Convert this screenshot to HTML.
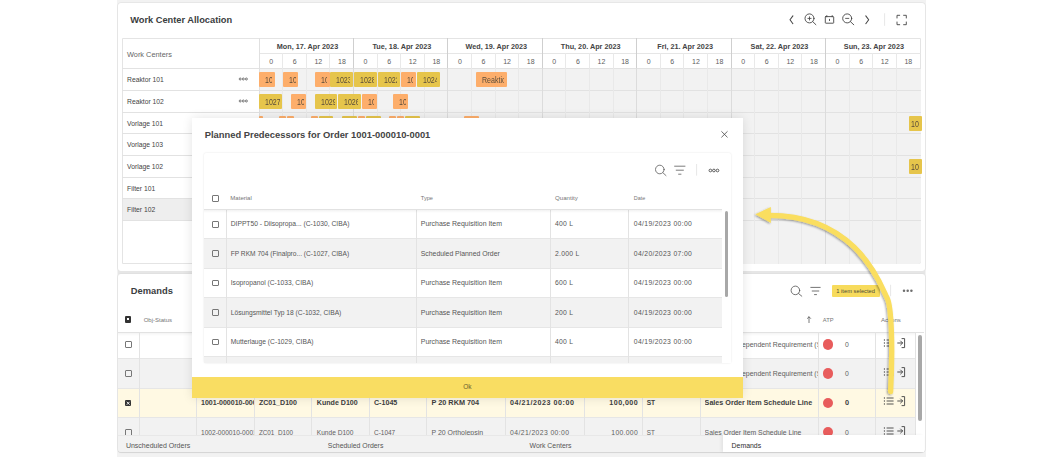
<!DOCTYPE html>
<html><head><meta charset="utf-8"><style>
html,body{margin:0;padding:0;}
body{width:1042px;height:457px;position:relative;overflow:hidden;background:#fff;font-family:"Liberation Sans",sans-serif;}
</style></head><body>
<div style="position:absolute;left:117.00px;top:0.00px;width:809.00px;height:457.00px;background:#F2F2F2;"></div>
<div style="position:absolute;left:117.60px;top:2.60px;width:807.00px;height:268.40px;background:#fff;border-radius:3px;box-shadow:0 0 0 0.6px #E2E2E2, 0 0 1.5px rgba(0,0,0,0.12);"></div>
<div style="position:absolute;left:130.20px;top:10.00px;line-height:20px;font-size:9.27px;font-weight:bold;color:#3A3D40;white-space:nowrap;">Work Center Allocation</div>
<svg style="position:absolute;left:0;top:0" width="1042" height="457">
<g fill="none" stroke="#444" stroke-width="0.9" stroke-linecap="round" stroke-linejoin="round">
<path d="M792.9 15.9 L790 19.8 L792.9 23.7" stroke-width="1.05"/>
<circle cx="809.5" cy="18.4" r="4.5"/><path d="M812.7 21.6 L815.9 24.7"/><path d="M809.5 16.8 V20 M807.9 18.4 H811.1" stroke-width="0.85"/>
<rect x="825.3" y="16.6" width="8.4" height="6.6" rx="0.5"/><path d="M826.8 15.6 V16.8 M832.2 15.6 V16.8 M829.5 19.3 V20.6"/>
<circle cx="847.2" cy="18.4" r="4.5"/><path d="M850.4 21.6 L853.8 24.8"/><path d="M845.6 18.4 H848.8" stroke-width="0.85"/>
<path d="M865.8 15.9 L868.7 19.8 L865.8 23.7" stroke-width="1.05"/>
<path d="M897 18 V15.3 H899.7 M903.6 15.3 H906.3 V18 M906.3 22 V24.7 H903.6 M899.7 24.7 H897 V22"/>
</g>
<path d="M884.6 13.3 V25.8" stroke="#E0E0E0" stroke-width="0.8"/>
</svg>
<div style="position:absolute;left:122.00px;top:38.00px;width:799.00px;height:226.00px;border:1px solid #E4E4E4;box-sizing:border-box;background:#fff;border-radius:0 0 2px 0;"></div>
<div style="position:absolute;left:259.00px;top:68.00px;width:662.00px;height:196.00px;background:#F2F2F2;border-radius:0 0 3px 0;"></div>
<div style="position:absolute;left:123.00px;top:199.00px;width:136.00px;height:21.00px;background:#EEEEEE;"></div>
<div style="position:absolute;left:122.00px;top:68.00px;width:799.00px;height:1.00px;background:#E2E2E2;"></div>
<div style="position:absolute;left:259.00px;top:53.00px;width:662.00px;height:1.00px;background:#E6E6E6;"></div>
<div style="position:absolute;left:122.00px;top:90.00px;width:799.00px;height:1.00px;background:#E2E2E2;"></div>
<div style="position:absolute;left:122.00px;top:112.00px;width:799.00px;height:1.00px;background:#E2E2E2;"></div>
<div style="position:absolute;left:122.00px;top:133.00px;width:799.00px;height:1.00px;background:#E2E2E2;"></div>
<div style="position:absolute;left:122.00px;top:155.00px;width:799.00px;height:1.00px;background:#E2E2E2;"></div>
<div style="position:absolute;left:122.00px;top:177.00px;width:799.00px;height:1.00px;background:#E2E2E2;"></div>
<div style="position:absolute;left:122.00px;top:198.00px;width:799.00px;height:1.00px;background:#E2E2E2;"></div>
<div style="position:absolute;left:122.00px;top:220.00px;width:799.00px;height:1.00px;background:#E2E2E2;"></div>
<div style="position:absolute;left:259.00px;top:38.00px;width:1.00px;height:226.00px;background:#E0E0E0;"></div>
<div style="position:absolute;left:282.00px;top:53.00px;width:1.00px;height:211.00px;background:#E9E9E9;"></div>
<div style="position:absolute;left:306.00px;top:53.00px;width:1.00px;height:211.00px;background:#E9E9E9;"></div>
<div style="position:absolute;left:329.00px;top:53.00px;width:1.00px;height:211.00px;background:#E9E9E9;"></div>
<div style="position:absolute;left:353.00px;top:38.00px;width:1.00px;height:30.00px;background:#CFCFCF;"></div>
<div style="position:absolute;left:353.00px;top:68.00px;width:1.00px;height:196.00px;background:#DCDCDC;"></div>
<div style="position:absolute;left:377.00px;top:53.00px;width:1.00px;height:211.00px;background:#E9E9E9;"></div>
<div style="position:absolute;left:400.00px;top:53.00px;width:1.00px;height:211.00px;background:#E9E9E9;"></div>
<div style="position:absolute;left:424.00px;top:53.00px;width:1.00px;height:211.00px;background:#E9E9E9;"></div>
<div style="position:absolute;left:447.00px;top:38.00px;width:1.00px;height:30.00px;background:#CFCFCF;"></div>
<div style="position:absolute;left:447.00px;top:68.00px;width:1.00px;height:196.00px;background:#DCDCDC;"></div>
<div style="position:absolute;left:471.00px;top:53.00px;width:1.00px;height:211.00px;background:#E9E9E9;"></div>
<div style="position:absolute;left:495.00px;top:53.00px;width:1.00px;height:211.00px;background:#E9E9E9;"></div>
<div style="position:absolute;left:518.00px;top:53.00px;width:1.00px;height:211.00px;background:#E9E9E9;"></div>
<div style="position:absolute;left:542.00px;top:38.00px;width:1.00px;height:30.00px;background:#CFCFCF;"></div>
<div style="position:absolute;left:542.00px;top:68.00px;width:1.00px;height:196.00px;background:#DCDCDC;"></div>
<div style="position:absolute;left:565.00px;top:53.00px;width:1.00px;height:211.00px;background:#E9E9E9;"></div>
<div style="position:absolute;left:589.00px;top:53.00px;width:1.00px;height:211.00px;background:#E9E9E9;"></div>
<div style="position:absolute;left:613.00px;top:53.00px;width:1.00px;height:211.00px;background:#E9E9E9;"></div>
<div style="position:absolute;left:636.00px;top:38.00px;width:1.00px;height:30.00px;background:#CFCFCF;"></div>
<div style="position:absolute;left:636.00px;top:68.00px;width:1.00px;height:196.00px;background:#DCDCDC;"></div>
<div style="position:absolute;left:660.00px;top:53.00px;width:1.00px;height:211.00px;background:#E9E9E9;"></div>
<div style="position:absolute;left:683.00px;top:53.00px;width:1.00px;height:211.00px;background:#E9E9E9;"></div>
<div style="position:absolute;left:707.00px;top:53.00px;width:1.00px;height:211.00px;background:#E9E9E9;"></div>
<div style="position:absolute;left:731.00px;top:38.00px;width:1.00px;height:30.00px;background:#CFCFCF;"></div>
<div style="position:absolute;left:731.00px;top:68.00px;width:1.00px;height:196.00px;background:#DCDCDC;"></div>
<div style="position:absolute;left:754.00px;top:53.00px;width:1.00px;height:211.00px;background:#E9E9E9;"></div>
<div style="position:absolute;left:778.00px;top:53.00px;width:1.00px;height:211.00px;background:#E9E9E9;"></div>
<div style="position:absolute;left:801.00px;top:53.00px;width:1.00px;height:211.00px;background:#E9E9E9;"></div>
<div style="position:absolute;left:825.00px;top:38.00px;width:1.00px;height:30.00px;background:#CFCFCF;"></div>
<div style="position:absolute;left:825.00px;top:68.00px;width:1.00px;height:196.00px;background:#DCDCDC;"></div>
<div style="position:absolute;left:849.00px;top:53.00px;width:1.00px;height:211.00px;background:#E9E9E9;"></div>
<div style="position:absolute;left:872.00px;top:53.00px;width:1.00px;height:211.00px;background:#E9E9E9;"></div>
<div style="position:absolute;left:896.00px;top:53.00px;width:1.00px;height:211.00px;background:#E9E9E9;"></div>
<div style="position:absolute;left:207.50px;width:200px;text-align:center;top:36.70px;line-height:20px;font-size:7.26px;font-weight:bold;color:#444;white-space:nowrap;">Mon, 17. Apr 2023</div>
<div style="position:absolute;left:171.10px;width:200px;text-align:center;top:51.70px;line-height:20px;font-size:7.00px;font-weight:normal;color:#606060;white-space:nowrap;">0</div>
<div style="position:absolute;left:194.70px;width:200px;text-align:center;top:51.70px;line-height:20px;font-size:7.00px;font-weight:normal;color:#606060;white-space:nowrap;">6</div>
<div style="position:absolute;left:218.30px;width:200px;text-align:center;top:51.70px;line-height:20px;font-size:7.00px;font-weight:normal;color:#606060;white-space:nowrap;">12</div>
<div style="position:absolute;left:241.90px;width:200px;text-align:center;top:51.70px;line-height:20px;font-size:7.00px;font-weight:normal;color:#606060;white-space:nowrap;">18</div>
<div style="position:absolute;left:301.90px;width:200px;text-align:center;top:36.70px;line-height:20px;font-size:7.26px;font-weight:bold;color:#444;white-space:nowrap;">Tue, 18. Apr 2023</div>
<div style="position:absolute;left:265.50px;width:200px;text-align:center;top:51.70px;line-height:20px;font-size:7.00px;font-weight:normal;color:#606060;white-space:nowrap;">0</div>
<div style="position:absolute;left:289.10px;width:200px;text-align:center;top:51.70px;line-height:20px;font-size:7.00px;font-weight:normal;color:#606060;white-space:nowrap;">6</div>
<div style="position:absolute;left:312.70px;width:200px;text-align:center;top:51.70px;line-height:20px;font-size:7.00px;font-weight:normal;color:#606060;white-space:nowrap;">12</div>
<div style="position:absolute;left:336.30px;width:200px;text-align:center;top:51.70px;line-height:20px;font-size:7.00px;font-weight:normal;color:#606060;white-space:nowrap;">18</div>
<div style="position:absolute;left:396.30px;width:200px;text-align:center;top:36.70px;line-height:20px;font-size:7.26px;font-weight:bold;color:#444;white-space:nowrap;">Wed, 19. Apr 2023</div>
<div style="position:absolute;left:359.90px;width:200px;text-align:center;top:51.70px;line-height:20px;font-size:7.00px;font-weight:normal;color:#606060;white-space:nowrap;">0</div>
<div style="position:absolute;left:383.50px;width:200px;text-align:center;top:51.70px;line-height:20px;font-size:7.00px;font-weight:normal;color:#606060;white-space:nowrap;">6</div>
<div style="position:absolute;left:407.10px;width:200px;text-align:center;top:51.70px;line-height:20px;font-size:7.00px;font-weight:normal;color:#606060;white-space:nowrap;">12</div>
<div style="position:absolute;left:430.70px;width:200px;text-align:center;top:51.70px;line-height:20px;font-size:7.00px;font-weight:normal;color:#606060;white-space:nowrap;">18</div>
<div style="position:absolute;left:490.70px;width:200px;text-align:center;top:36.70px;line-height:20px;font-size:7.26px;font-weight:bold;color:#444;white-space:nowrap;">Thu, 20. Apr 2023</div>
<div style="position:absolute;left:454.30px;width:200px;text-align:center;top:51.70px;line-height:20px;font-size:7.00px;font-weight:normal;color:#606060;white-space:nowrap;">0</div>
<div style="position:absolute;left:477.90px;width:200px;text-align:center;top:51.70px;line-height:20px;font-size:7.00px;font-weight:normal;color:#606060;white-space:nowrap;">6</div>
<div style="position:absolute;left:501.50px;width:200px;text-align:center;top:51.70px;line-height:20px;font-size:7.00px;font-weight:normal;color:#606060;white-space:nowrap;">12</div>
<div style="position:absolute;left:525.10px;width:200px;text-align:center;top:51.70px;line-height:20px;font-size:7.00px;font-weight:normal;color:#606060;white-space:nowrap;">18</div>
<div style="position:absolute;left:585.10px;width:200px;text-align:center;top:36.70px;line-height:20px;font-size:7.26px;font-weight:bold;color:#444;white-space:nowrap;">Fri, 21. Apr 2023</div>
<div style="position:absolute;left:548.70px;width:200px;text-align:center;top:51.70px;line-height:20px;font-size:7.00px;font-weight:normal;color:#606060;white-space:nowrap;">0</div>
<div style="position:absolute;left:572.30px;width:200px;text-align:center;top:51.70px;line-height:20px;font-size:7.00px;font-weight:normal;color:#606060;white-space:nowrap;">6</div>
<div style="position:absolute;left:595.90px;width:200px;text-align:center;top:51.70px;line-height:20px;font-size:7.00px;font-weight:normal;color:#606060;white-space:nowrap;">12</div>
<div style="position:absolute;left:619.50px;width:200px;text-align:center;top:51.70px;line-height:20px;font-size:7.00px;font-weight:normal;color:#606060;white-space:nowrap;">18</div>
<div style="position:absolute;left:679.50px;width:200px;text-align:center;top:36.70px;line-height:20px;font-size:7.26px;font-weight:bold;color:#444;white-space:nowrap;">Sat, 22. Apr 2023</div>
<div style="position:absolute;left:643.10px;width:200px;text-align:center;top:51.70px;line-height:20px;font-size:7.00px;font-weight:normal;color:#606060;white-space:nowrap;">0</div>
<div style="position:absolute;left:666.70px;width:200px;text-align:center;top:51.70px;line-height:20px;font-size:7.00px;font-weight:normal;color:#606060;white-space:nowrap;">6</div>
<div style="position:absolute;left:690.30px;width:200px;text-align:center;top:51.70px;line-height:20px;font-size:7.00px;font-weight:normal;color:#606060;white-space:nowrap;">12</div>
<div style="position:absolute;left:713.90px;width:200px;text-align:center;top:51.70px;line-height:20px;font-size:7.00px;font-weight:normal;color:#606060;white-space:nowrap;">18</div>
<div style="position:absolute;left:773.90px;width:200px;text-align:center;top:36.70px;line-height:20px;font-size:7.26px;font-weight:bold;color:#444;white-space:nowrap;">Sun, 23. Apr 2023</div>
<div style="position:absolute;left:737.50px;width:200px;text-align:center;top:51.70px;line-height:20px;font-size:7.00px;font-weight:normal;color:#606060;white-space:nowrap;">0</div>
<div style="position:absolute;left:761.10px;width:200px;text-align:center;top:51.70px;line-height:20px;font-size:7.00px;font-weight:normal;color:#606060;white-space:nowrap;">6</div>
<div style="position:absolute;left:784.70px;width:200px;text-align:center;top:51.70px;line-height:20px;font-size:7.00px;font-weight:normal;color:#606060;white-space:nowrap;">12</div>
<div style="position:absolute;left:808.30px;width:200px;text-align:center;top:51.70px;line-height:20px;font-size:7.00px;font-weight:normal;color:#606060;white-space:nowrap;">18</div>
<div style="position:absolute;left:127.00px;top:45.20px;line-height:20px;font-size:7.37px;font-weight:normal;color:#666;white-space:nowrap;">Work Centers</div>
<div style="position:absolute;left:127.00px;top:69.65px;line-height:20px;font-size:6.77px;font-weight:normal;color:#444;white-space:nowrap;">Reaktor 101</div>
<div style="position:absolute;left:127.00px;top:91.65px;line-height:20px;font-size:6.77px;font-weight:normal;color:#444;white-space:nowrap;">Reaktor 102</div>
<div style="position:absolute;left:127.00px;top:113.65px;line-height:20px;font-size:6.77px;font-weight:normal;color:#444;white-space:nowrap;">Vorlage 101</div>
<div style="position:absolute;left:127.00px;top:134.65px;line-height:20px;font-size:6.77px;font-weight:normal;color:#444;white-space:nowrap;">Vorlage 103</div>
<div style="position:absolute;left:127.00px;top:156.65px;line-height:20px;font-size:6.77px;font-weight:normal;color:#444;white-space:nowrap;">Vorlage 102</div>
<div style="position:absolute;left:127.00px;top:178.65px;line-height:20px;font-size:6.77px;font-weight:normal;color:#444;white-space:nowrap;">Filter 101</div>
<div style="position:absolute;left:127.00px;top:199.65px;line-height:20px;font-size:6.77px;font-weight:normal;color:#444;white-space:nowrap;">Filter 102</div>
<svg style="position:absolute;left:238px;top:76.25px" width="12" height="6"><g fill="none" stroke="#666" stroke-width="0.9"><circle cx="2.2" cy="3" r="1.0"/><circle cx="5.3" cy="3" r="1.0"/><circle cx="8.4" cy="3" r="1.0"/></g></svg>
<svg style="position:absolute;left:238px;top:98.25px" width="12" height="6"><g fill="none" stroke="#666" stroke-width="0.9"><circle cx="2.2" cy="3" r="1.0"/><circle cx="5.3" cy="3" r="1.0"/><circle cx="8.4" cy="3" r="1.0"/></g></svg>
<div style="position:absolute;left:909.00px;top:115.80px;width:13.00px;height:15.1px;background:#E6C54B;border-radius:1px;overflow:hidden;"><div style="position:absolute;left:1.8px;width:8.60px;top:0;height:15.1px;overflow:hidden;"><div style="position:absolute;left:0;top:1.3px;line-height:15.1px;font-size:8.4px;color:#5A4C3A;white-space:nowrap;transform:scaleX(0.84);transform-origin:0 0;">1030</div></div></div>
<div style="position:absolute;left:909.00px;top:158.80px;width:13.00px;height:15.1px;background:#E6C54B;border-radius:1px;overflow:hidden;"><div style="position:absolute;left:1.8px;width:8.60px;top:0;height:15.1px;overflow:hidden;"><div style="position:absolute;left:0;top:1.3px;line-height:15.1px;font-size:8.4px;color:#5A4C3A;white-space:nowrap;transform:scaleX(0.84);transform-origin:0 0;">1031</div></div></div>
<div style="position:absolute;left:259.40px;top:71.80px;width:15.40px;height:15.1px;background:#FDAE6B;border-radius:1px;overflow:hidden;"><div style="position:absolute;left:6.0px;width:6.80px;top:0;height:15.1px;overflow:hidden;"><div style="position:absolute;left:0;top:1.3px;line-height:15.1px;font-size:8.4px;color:#5A4C3A;white-space:nowrap;transform:scaleX(0.84);transform-origin:0 0;">10</div></div></div>
<div style="position:absolute;left:283.20px;top:71.80px;width:15.00px;height:15.1px;background:#FDAE6B;border-radius:1px;overflow:hidden;"><div style="position:absolute;left:6.0px;width:6.40px;top:0;height:15.1px;overflow:hidden;"><div style="position:absolute;left:0;top:1.3px;line-height:15.1px;font-size:8.4px;color:#5A4C3A;white-space:nowrap;transform:scaleX(0.84);transform-origin:0 0;">10</div></div></div>
<div style="position:absolute;left:315.10px;top:71.80px;width:14.80px;height:15.1px;background:#FDAE6B;border-radius:1px;overflow:hidden;"><div style="position:absolute;left:6.0px;width:6.20px;top:0;height:15.1px;overflow:hidden;"><div style="position:absolute;left:0;top:1.3px;line-height:15.1px;font-size:8.4px;color:#5A4C3A;white-space:nowrap;transform:scaleX(0.84);transform-origin:0 0;">10</div></div></div>
<div style="position:absolute;left:330.20px;top:71.80px;width:22.50px;height:15.1px;background:#E6C54B;border-radius:1px;overflow:hidden;"><div style="position:absolute;left:6.0px;width:13.90px;top:0;height:15.1px;overflow:hidden;"><div style="position:absolute;left:0;top:1.3px;line-height:15.1px;font-size:8.4px;color:#5A4C3A;white-space:nowrap;transform:scaleX(0.84);transform-origin:0 0;">1023</div></div></div>
<div style="position:absolute;left:354.30px;top:71.80px;width:22.60px;height:15.1px;background:#E6C54B;border-radius:1px;overflow:hidden;"><div style="position:absolute;left:6.0px;width:14.00px;top:0;height:15.1px;overflow:hidden;"><div style="position:absolute;left:0;top:1.3px;line-height:15.1px;font-size:8.4px;color:#5A4C3A;white-space:nowrap;transform:scaleX(0.84);transform-origin:0 0;">1028</div></div></div>
<div style="position:absolute;left:377.80px;top:71.80px;width:22.20px;height:15.1px;background:#E6C54B;border-radius:1px;overflow:hidden;"><div style="position:absolute;left:6.0px;width:13.60px;top:0;height:15.1px;overflow:hidden;"><div style="position:absolute;left:0;top:1.3px;line-height:15.1px;font-size:8.4px;color:#5A4C3A;white-space:nowrap;transform:scaleX(0.84);transform-origin:0 0;">1022</div></div></div>
<div style="position:absolute;left:401.10px;top:71.80px;width:14.80px;height:15.1px;background:#FDAE6B;border-radius:1px;overflow:hidden;"><div style="position:absolute;left:6.0px;width:6.20px;top:0;height:15.1px;overflow:hidden;"><div style="position:absolute;left:0;top:1.3px;line-height:15.1px;font-size:8.4px;color:#5A4C3A;white-space:nowrap;transform:scaleX(0.84);transform-origin:0 0;">10</div></div></div>
<div style="position:absolute;left:417.10px;top:71.80px;width:22.60px;height:15.1px;background:#E6C54B;border-radius:1px;overflow:hidden;"><div style="position:absolute;left:6.0px;width:14.00px;top:0;height:15.1px;overflow:hidden;"><div style="position:absolute;left:0;top:1.3px;line-height:15.1px;font-size:8.4px;color:#5A4C3A;white-space:nowrap;transform:scaleX(0.84);transform-origin:0 0;">1024</div></div></div>
<div style="position:absolute;left:476.30px;top:71.80px;width:30.60px;height:15.1px;background:#FDAE6B;border-radius:1px;overflow:hidden;"><div style="position:absolute;left:6.0px;width:22.00px;top:0;height:15.1px;overflow:hidden;"><div style="position:absolute;left:0;top:1.3px;line-height:15.1px;font-size:8.4px;color:#5A4C3A;white-space:nowrap;transform:scaleX(0.84);transform-origin:0 0;">Reaktion</div></div></div>
<div style="position:absolute;left:259.40px;top:93.80px;width:23.10px;height:15.1px;background:#E6C54B;border-radius:1px;overflow:hidden;"><div style="position:absolute;left:6.0px;width:14.50px;top:0;height:15.1px;overflow:hidden;"><div style="position:absolute;left:0;top:1.3px;line-height:15.1px;font-size:8.4px;color:#5A4C3A;white-space:nowrap;transform:scaleX(0.84);transform-origin:0 0;">1027</div></div></div>
<div style="position:absolute;left:291.00px;top:93.80px;width:15.10px;height:15.1px;background:#FDAE6B;border-radius:1px;overflow:hidden;"><div style="position:absolute;left:6.0px;width:6.50px;top:0;height:15.1px;overflow:hidden;"><div style="position:absolute;left:0;top:1.3px;line-height:15.1px;font-size:8.4px;color:#5A4C3A;white-space:nowrap;transform:scaleX(0.84);transform-origin:0 0;">10</div></div></div>
<div style="position:absolute;left:315.10px;top:93.80px;width:22.40px;height:15.1px;background:#E6C54B;border-radius:1px;overflow:hidden;"><div style="position:absolute;left:6.0px;width:13.80px;top:0;height:15.1px;overflow:hidden;"><div style="position:absolute;left:0;top:1.3px;line-height:15.1px;font-size:8.4px;color:#5A4C3A;white-space:nowrap;transform:scaleX(0.84);transform-origin:0 0;">1029</div></div></div>
<div style="position:absolute;left:338.20px;top:93.80px;width:22.60px;height:15.1px;background:#E6C54B;border-radius:1px;overflow:hidden;"><div style="position:absolute;left:6.0px;width:14.00px;top:0;height:15.1px;overflow:hidden;"><div style="position:absolute;left:0;top:1.3px;line-height:15.1px;font-size:8.4px;color:#5A4C3A;white-space:nowrap;transform:scaleX(0.84);transform-origin:0 0;">1026</div></div></div>
<div style="position:absolute;left:362.10px;top:93.80px;width:14.70px;height:15.1px;background:#FDAE6B;border-radius:1px;overflow:hidden;"><div style="position:absolute;left:6.0px;width:6.10px;top:0;height:15.1px;overflow:hidden;"><div style="position:absolute;left:0;top:1.3px;line-height:15.1px;font-size:8.4px;color:#5A4C3A;white-space:nowrap;transform:scaleX(0.84);transform-origin:0 0;">10</div></div></div>
<div style="position:absolute;left:393.00px;top:93.80px;width:15.30px;height:15.1px;background:#FDAE6B;border-radius:1px;overflow:hidden;"><div style="position:absolute;left:6.0px;width:6.70px;top:0;height:15.1px;overflow:hidden;"><div style="position:absolute;left:0;top:1.3px;line-height:15.1px;font-size:8.4px;color:#5A4C3A;white-space:nowrap;transform:scaleX(0.84);transform-origin:0 0;">10</div></div></div>
<div style="position:absolute;left:259.40px;top:115.80px;width:3.50px;height:15.1px;background:#FDAE6B;border-radius:1px;overflow:hidden;"><div style="position:absolute;left:6.0px;width:-5.10px;top:0;height:15.1px;overflow:hidden;"><div style="position:absolute;left:0;top:1.3px;line-height:15.1px;font-size:8.4px;color:#5A4C3A;white-space:nowrap;transform:scaleX(0.84);transform-origin:0 0;"></div></div></div>
<div style="position:absolute;left:279.00px;top:115.80px;width:6.70px;height:15.1px;background:#FDAE6B;border-radius:1px;overflow:hidden;"><div style="position:absolute;left:6.0px;width:-1.90px;top:0;height:15.1px;overflow:hidden;"><div style="position:absolute;left:0;top:1.3px;line-height:15.1px;font-size:8.4px;color:#5A4C3A;white-space:nowrap;transform:scaleX(0.84);transform-origin:0 0;"></div></div></div>
<div style="position:absolute;left:286.90px;top:115.80px;width:7.00px;height:15.1px;background:#FDAE6B;border-radius:1px;overflow:hidden;"><div style="position:absolute;left:6.0px;width:-1.60px;top:0;height:15.1px;overflow:hidden;"><div style="position:absolute;left:0;top:1.3px;line-height:15.1px;font-size:8.4px;color:#5A4C3A;white-space:nowrap;transform:scaleX(0.84);transform-origin:0 0;"></div></div></div>
<div style="position:absolute;left:310.70px;top:115.80px;width:7.20px;height:15.1px;background:#FDAE6B;border-radius:1px;overflow:hidden;"><div style="position:absolute;left:6.0px;width:-1.40px;top:0;height:15.1px;overflow:hidden;"><div style="position:absolute;left:0;top:1.3px;line-height:15.1px;font-size:8.4px;color:#5A4C3A;white-space:nowrap;transform:scaleX(0.84);transform-origin:0 0;"></div></div></div>
<div style="position:absolute;left:318.60px;top:115.80px;width:14.40px;height:15.1px;background:#E6C54B;border-radius:1px;overflow:hidden;"><div style="position:absolute;left:6.0px;width:5.80px;top:0;height:15.1px;overflow:hidden;"><div style="position:absolute;left:0;top:1.3px;line-height:15.1px;font-size:8.4px;color:#5A4C3A;white-space:nowrap;transform:scaleX(0.84);transform-origin:0 0;"></div></div></div>
<div style="position:absolute;left:341.90px;top:115.80px;width:15.10px;height:15.1px;background:#E6C54B;border-radius:1px;overflow:hidden;"><div style="position:absolute;left:6.0px;width:6.50px;top:0;height:15.1px;overflow:hidden;"><div style="position:absolute;left:0;top:1.3px;line-height:15.1px;font-size:8.4px;color:#5A4C3A;white-space:nowrap;transform:scaleX(0.84);transform-origin:0 0;"></div></div></div>
<div style="position:absolute;left:358.20px;top:115.80px;width:6.70px;height:15.1px;background:#FDAE6B;border-radius:1px;overflow:hidden;"><div style="position:absolute;left:6.0px;width:-1.90px;top:0;height:15.1px;overflow:hidden;"><div style="position:absolute;left:0;top:1.3px;line-height:15.1px;font-size:8.4px;color:#5A4C3A;white-space:nowrap;transform:scaleX(0.84);transform-origin:0 0;"></div></div></div>
<div style="position:absolute;left:365.80px;top:115.80px;width:15.20px;height:15.1px;background:#E6C54B;border-radius:1px;overflow:hidden;"><div style="position:absolute;left:6.0px;width:6.60px;top:0;height:15.1px;overflow:hidden;"><div style="position:absolute;left:0;top:1.3px;line-height:15.1px;font-size:8.4px;color:#5A4C3A;white-space:nowrap;transform:scaleX(0.84);transform-origin:0 0;"></div></div></div>
<div style="position:absolute;left:388.60px;top:115.80px;width:7.40px;height:15.1px;background:#FDAE6B;border-radius:1px;overflow:hidden;"><div style="position:absolute;left:6.0px;width:-1.20px;top:0;height:15.1px;overflow:hidden;"><div style="position:absolute;left:0;top:1.3px;line-height:15.1px;font-size:8.4px;color:#5A4C3A;white-space:nowrap;transform:scaleX(0.84);transform-origin:0 0;"></div></div></div>
<div style="position:absolute;left:397.00px;top:115.80px;width:6.80px;height:15.1px;background:#FDAE6B;border-radius:1px;overflow:hidden;"><div style="position:absolute;left:6.0px;width:-1.80px;top:0;height:15.1px;overflow:hidden;"><div style="position:absolute;left:0;top:1.3px;line-height:15.1px;font-size:8.4px;color:#5A4C3A;white-space:nowrap;transform:scaleX(0.84);transform-origin:0 0;"></div></div></div>
<div style="position:absolute;left:405.00px;top:115.80px;width:14.80px;height:15.1px;background:#E6C54B;border-radius:1px;overflow:hidden;"><div style="position:absolute;left:6.0px;width:6.20px;top:0;height:15.1px;overflow:hidden;"><div style="position:absolute;left:0;top:1.3px;line-height:15.1px;font-size:8.4px;color:#5A4C3A;white-space:nowrap;transform:scaleX(0.84);transform-origin:0 0;"></div></div></div>
<div style="position:absolute;left:463.70px;top:115.80px;width:14.90px;height:15.1px;background:#FDAE6B;border-radius:1px;overflow:hidden;"><div style="position:absolute;left:6.0px;width:6.30px;top:0;height:15.1px;overflow:hidden;"><div style="position:absolute;left:0;top:1.3px;line-height:15.1px;font-size:8.4px;color:#5A4C3A;white-space:nowrap;transform:scaleX(0.84);transform-origin:0 0;"></div></div></div>
<div style="position:absolute;left:117.60px;top:271.00px;width:807.00px;height:3.00px;background:#E6E6E6;"></div>
<div style="position:absolute;left:117.60px;top:274.00px;width:807.00px;height:178.00px;background:#fff;border-radius:3px;box-shadow:0 0 0 0.6px #E2E2E2, 0 0 1.5px rgba(0,0,0,0.12);"></div>
<div style="position:absolute;left:130.80px;top:281.00px;line-height:20px;font-size:9.35px;font-weight:bold;color:#3A3D40;white-space:nowrap;">Demands</div>
<svg style="position:absolute;left:0;top:0" width="1042" height="457">
<g fill="none" stroke="#505050" stroke-width="0.8" stroke-linecap="round">
<circle cx="795.4" cy="290.4" r="4.3"/><path d="M798.6 293.6 L801.8 296.2"/>
<path d="M810.8 287.4 H820.2 M812.2 291 H818.8 M814.5 294.6 H816.5"/>

</g>
<path d="M890.6 284.8 V296.2" stroke="#E0E0E0" stroke-width="0.8"/>
</svg>
<div style="position:absolute;left:831.80px;top:284.60px;width:48.00px;height:12.20px;background:#F7DB5C;border-radius:1px;"></div>
<svg style="position:absolute;left:900px;top:287px" width="16" height="8"><g fill="#6E6E6E"><circle cx="4" cy="3.85" r="1.25"/><circle cx="7.7" cy="3.85" r="1.25"/><circle cx="11.4" cy="3.85" r="1.25"/></g></svg>
<div style="position:absolute;left:836.30px;top:281.40px;line-height:20px;font-size:5.75px;font-weight:normal;color:#4A4A3A;white-space:nowrap;">1 item selected</div>
<div style="position:absolute;left:118.00px;top:332.00px;width:797.70px;height:26.00px;background:#FFFFFF;"></div>
<div style="position:absolute;left:118.00px;top:358.00px;width:797.70px;height:30.00px;background:#F2F2F2;"></div>
<div style="position:absolute;left:118.00px;top:358.00px;width:797.70px;height:1.00px;background:#E6E6E6;"></div>
<div style="position:absolute;left:118.00px;top:388.00px;width:797.70px;height:29.00px;background:#FFF9E3;"></div>
<div style="position:absolute;left:118.00px;top:388.00px;width:797.70px;height:1.00px;background:#E6E6E6;"></div>
<div style="position:absolute;left:118.00px;top:417.00px;width:797.70px;height:18.00px;background:#F2F2F2;"></div>
<div style="position:absolute;left:118.00px;top:417.00px;width:797.70px;height:1.00px;background:#E6E6E6;"></div>
<div style="position:absolute;left:118.00px;top:300.00px;width:806.00px;height:32.00px;background:#fff;"></div>
<div style="position:absolute;left:118.00px;top:332.00px;width:806.00px;height:1.00px;background:#E2E2E2;"></div>
<div style="position:absolute;left:118.00px;top:333.00px;width:797.70px;height:3.00px;background:linear-gradient(rgba(0,0,0,0.045),rgba(0,0,0,0));"></div>
<div style="position:absolute;left:139.00px;top:332.00px;width:1.00px;height:103.00px;background:#E3E3E3;"></div>
<div style="position:absolute;left:196.00px;top:332.00px;width:1.00px;height:103.00px;background:#E3E3E3;"></div>
<div style="position:absolute;left:254.00px;top:332.00px;width:1.00px;height:103.00px;background:#E3E3E3;"></div>
<div style="position:absolute;left:311.00px;top:332.00px;width:1.00px;height:103.00px;background:#E3E3E3;"></div>
<div style="position:absolute;left:369.00px;top:332.00px;width:1.00px;height:103.00px;background:#E3E3E3;"></div>
<div style="position:absolute;left:426.00px;top:332.00px;width:1.00px;height:103.00px;background:#E3E3E3;"></div>
<div style="position:absolute;left:505.00px;top:332.00px;width:1.00px;height:103.00px;background:#E3E3E3;"></div>
<div style="position:absolute;left:584.00px;top:332.00px;width:1.00px;height:103.00px;background:#E3E3E3;"></div>
<div style="position:absolute;left:642.00px;top:332.00px;width:1.00px;height:103.00px;background:#E3E3E3;"></div>
<div style="position:absolute;left:700.00px;top:332.00px;width:1.00px;height:103.00px;background:#E3E3E3;"></div>
<div style="position:absolute;left:818.00px;top:332.00px;width:1.00px;height:103.00px;background:#E3E3E3;"></div>
<div style="position:absolute;left:875.00px;top:332.00px;width:1.00px;height:103.00px;background:#E3E3E3;"></div>
<div style="position:absolute;left:915.00px;top:332.00px;width:1.00px;height:103.00px;background:#E3E3E3;"></div>
<div style="position:absolute;left:916.00px;top:333.00px;width:8.00px;height:102.00px;background:#fff;"></div>
<div style="position:absolute;left:918.10px;top:335.00px;width:3.70px;height:86.20px;background:#A8A8A8;border-radius:2px;"></div>
<div style="position:absolute;left:125.10px;top:316.10px;width:6.40px;height:6.50px;background:#333;border-radius:1px;"></div>
<div style="position:absolute;left:127.20px;top:318.20px;width:2.20px;height:2.20px;background:#fff;"></div>
<div style="position:absolute;left:143.70px;top:309.90px;line-height:20px;font-size:5.99px;font-weight:normal;color:#767676;white-space:nowrap;">Obj-Status</div>
<svg style="position:absolute;left:806px;top:315px" width="6" height="9"><path d="M3 1.8 V7.6 M1.4 3.4 L3 1.8 L4.6 3.4" fill="none" stroke="#555" stroke-width="0.8" stroke-linecap="round"/></svg>
<div style="position:absolute;left:822.80px;top:309.90px;line-height:20px;font-size:5.77px;font-weight:normal;color:#767676;white-space:nowrap;">ATP</div>
<div style="position:absolute;left:881.00px;top:309.90px;line-height:20px;font-size:6.04px;font-weight:normal;color:#767676;white-space:nowrap;">Actions</div>
<div style="position:absolute;left:125.10px;top:341.00px;width:6.80px;height:6.80px;border:1px solid #777;border-radius:1px;box-sizing:border-box;"></div>
<div style="position:absolute;left:822.70px;top:339.10px;width:10.6px;height:10.6px;border-radius:50%;background:#E85C5C;"></div>
<div style="position:absolute;left:845.00px;top:334.70px;line-height:20px;font-size:6.80px;font-weight:normal;color:#606060;white-space:nowrap;">0</div>
<svg style="position:absolute;left:880px;top:334.90px" width="30" height="16"><g fill="none" stroke="#4A4A4A" stroke-width="0.95" stroke-linecap="round" stroke-linejoin="round">
<path d="M7 5 H13.2 M7 8 H13.2 M7 11 H13.2"/>
<path d="M17.7 8 H22.6 M20.6 6 L22.6 8 L20.6 10 M22 3.6 H24.6 V12.6 H22"/>
</g><g fill="#4A4A4A"><circle cx="4.4" cy="5" r="0.65"/><circle cx="4.4" cy="8" r="0.65"/><circle cx="4.4" cy="11" r="0.65"/></g></svg>
<div style="position:absolute;left:125.10px;top:370.30px;width:6.80px;height:6.80px;border:1px solid #777;border-radius:1px;box-sizing:border-box;"></div>
<div style="position:absolute;left:822.70px;top:368.40px;width:10.6px;height:10.6px;border-radius:50%;background:#E85C5C;"></div>
<div style="position:absolute;left:845.00px;top:364.00px;line-height:20px;font-size:6.80px;font-weight:normal;color:#606060;white-space:nowrap;">0</div>
<svg style="position:absolute;left:880px;top:364.20px" width="30" height="16"><g fill="none" stroke="#4A4A4A" stroke-width="0.95" stroke-linecap="round" stroke-linejoin="round">
<path d="M7 5 H13.2 M7 8 H13.2 M7 11 H13.2"/>
<path d="M17.7 8 H22.6 M20.6 6 L22.6 8 L20.6 10 M22 3.6 H24.6 V12.6 H22"/>
</g><g fill="#4A4A4A"><circle cx="4.4" cy="5" r="0.65"/><circle cx="4.4" cy="8" r="0.65"/><circle cx="4.4" cy="11" r="0.65"/></g></svg>
<div style="position:absolute;left:125.10px;top:399.60px;width:6.40px;height:6.50px;background:#333;border-radius:1px;"></div>
<svg style="position:absolute;left:125.1px;top:399.60px" width="6.4" height="6.5"><path d="M1.8 1.8 L4.6 4.7 M4.6 1.8 L1.8 4.7" stroke="#fff" stroke-width="0.9"/></svg>
<div style="position:absolute;left:822.70px;top:397.60px;width:10.6px;height:10.6px;border-radius:50%;background:#E85C5C;"></div>
<div style="position:absolute;left:845.00px;top:393.20px;line-height:20px;font-size:7.30px;font-weight:bold;color:#404040;white-space:nowrap;">0</div>
<svg style="position:absolute;left:880px;top:393.40px" width="30" height="16"><g fill="none" stroke="#4A4A4A" stroke-width="0.95" stroke-linecap="round" stroke-linejoin="round">
<path d="M7 5 H13.2 M7 8 H13.2 M7 11 H13.2"/>
<path d="M17.7 8 H22.6 M20.6 6 L22.6 8 L20.6 10 M22 3.6 H24.6 V12.6 H22"/>
</g><g fill="#4A4A4A"><circle cx="4.4" cy="5" r="0.65"/><circle cx="4.4" cy="8" r="0.65"/><circle cx="4.4" cy="11" r="0.65"/></g></svg>
<div style="position:absolute;left:125.10px;top:428.80px;width:6.80px;height:6.80px;border:1px solid #777;border-radius:1px;box-sizing:border-box;"></div>
<div style="position:absolute;left:822.70px;top:426.90px;width:10.6px;height:10.6px;border-radius:50%;background:#E85C5C;"></div>
<div style="position:absolute;left:845.00px;top:422.50px;line-height:20px;font-size:6.80px;font-weight:normal;color:#606060;white-space:nowrap;">0</div>
<svg style="position:absolute;left:880px;top:422.70px" width="30" height="16"><g fill="none" stroke="#4A4A4A" stroke-width="0.95" stroke-linecap="round" stroke-linejoin="round">
<path d="M7 5 H13.2 M7 8 H13.2 M7 11 H13.2"/>
<path d="M17.7 8 H22.6 M20.6 6 L22.6 8 L20.6 10 M22 3.6 H24.6 V12.6 H22"/>
</g><g fill="#4A4A4A"><circle cx="4.4" cy="5" r="0.65"/><circle cx="4.4" cy="8" r="0.65"/><circle cx="4.4" cy="11" r="0.65"/></g></svg>
<div style="position:absolute;left:201.00px;top:393.20px;width:52.50px;overflow:hidden;line-height:20px;font-size:7.05px;font-weight:bold;color:#404040;white-space:nowrap;">1001-000010-0001</div>
<div style="position:absolute;left:258.90px;top:393.20px;line-height:20px;font-size:7.05px;font-weight:bold;color:#404040;white-space:nowrap;">ZC01_D100</div>
<div style="position:absolute;left:316.80px;top:393.20px;line-height:20px;font-size:7.08px;font-weight:bold;color:#404040;white-space:nowrap;">Kunde D100</div>
<div style="position:absolute;left:374.00px;top:393.20px;line-height:20px;font-size:7.10px;font-weight:bold;color:#404040;white-space:nowrap;">C-1045</div>
<div style="position:absolute;left:431.50px;top:393.20px;line-height:20px;font-size:7.29px;font-weight:bold;color:#404040;white-space:nowrap;">P 20 RKM 704</div>
<div style="position:absolute;left:510.10px;top:393.20px;line-height:20px;font-size:7.10px;font-weight:bold;color:#404040;white-space:nowrap;letter-spacing:0.55px;">04/21/2023 00:00</div>
<div style="position:absolute;right:403.85px;top:393.20px;line-height:20px;font-size:7.10px;font-weight:bold;color:#404040;white-space:nowrap;letter-spacing:0.45px;">100,000</div>
<div style="position:absolute;left:646.70px;top:393.20px;line-height:20px;font-size:6.65px;font-weight:bold;color:#404040;white-space:nowrap;">ST</div>
<div style="position:absolute;left:704.60px;top:393.20px;width:113.40px;overflow:hidden;line-height:20px;font-size:7.18px;font-weight:bold;color:#404040;white-space:nowrap;">Sales Order Item Schedule Line</div>
<div style="position:absolute;left:201.00px;top:422.50px;width:52.50px;overflow:hidden;line-height:20px;font-size:6.60px;font-weight:normal;color:#606060;white-space:nowrap;">1002-000010-0001</div>
<div style="position:absolute;left:258.90px;top:422.50px;line-height:20px;font-size:6.34px;font-weight:normal;color:#606060;white-space:nowrap;">ZC01_D100</div>
<div style="position:absolute;left:316.80px;top:422.50px;line-height:20px;font-size:6.60px;font-weight:normal;color:#606060;white-space:nowrap;">Kunde D100</div>
<div style="position:absolute;left:374.00px;top:422.50px;line-height:20px;font-size:6.46px;font-weight:normal;color:#606060;white-space:nowrap;">C-1047</div>
<div style="position:absolute;left:431.50px;top:422.50px;line-height:20px;font-size:6.95px;font-weight:normal;color:#606060;white-space:nowrap;">P 20 Ortholepsin</div>
<div style="position:absolute;left:510.10px;top:422.50px;line-height:20px;font-size:6.80px;font-weight:normal;color:#606060;white-space:nowrap;letter-spacing:0.4px;">04/21/2023 00:00</div>
<div style="position:absolute;right:404.00px;top:422.50px;line-height:20px;font-size:6.80px;font-weight:normal;color:#606060;white-space:nowrap;letter-spacing:0.3px;">100,000</div>
<div style="position:absolute;left:646.70px;top:422.50px;line-height:20px;font-size:6.30px;font-weight:normal;color:#606060;white-space:nowrap;">ST</div>
<div style="position:absolute;left:704.60px;top:422.50px;width:113.40px;overflow:hidden;line-height:20px;font-size:6.84px;font-weight:normal;color:#606060;white-space:nowrap;">Sales Order Item Schedule Line</div>
<div style="position:absolute;left:700px;top:334.70px;width:118px;height:20px;overflow:hidden;"><div style="position:absolute;left:37px;top:0;line-height:20px;font-size:6.93px;color:#606060;white-space:nowrap;">Dependent Requirement (Sales)</div></div>
<div style="position:absolute;left:700px;top:364.00px;width:118px;height:20px;overflow:hidden;"><div style="position:absolute;left:37px;top:0;line-height:20px;font-size:6.93px;color:#606060;white-space:nowrap;">Dependent Requirement (Sales)</div></div>
<div style="position:absolute;left:118.00px;top:435.00px;width:806.00px;height:17.00px;background:#F2F2F2;border-top:1px solid #E8E8E8;box-sizing:border-box;box-shadow:0 1px 1px rgba(0,0,0,0.08);border-radius:0 0 3px 3px;"></div>
<div style="position:absolute;left:722.70px;top:435.00px;width:201.00px;height:17.00px;background:#fff;box-shadow:-2px 0 3px rgba(0,0,0,0.06);"></div>
<div style="position:absolute;left:125.90px;top:435.50px;line-height:20px;font-size:7.03px;font-weight:normal;color:#555;white-space:nowrap;">Unscheduled Orders</div>
<div style="position:absolute;left:327.80px;top:435.50px;line-height:20px;font-size:6.90px;font-weight:normal;color:#555;white-space:nowrap;">Scheduled Orders</div>
<div style="position:absolute;left:529.50px;top:435.50px;line-height:20px;font-size:6.90px;font-weight:normal;color:#555;white-space:nowrap;">Work Centers</div>
<div style="position:absolute;left:731.60px;top:435.50px;line-height:20px;font-size:6.90px;font-weight:normal;color:#2E2E2E;white-space:nowrap;">Demands</div>
<div style="position:absolute;left:191.50px;top:117.50px;width:551.70px;height:280.00px;background:#fff;box-shadow:0 0 10px rgba(0,0,0,0.11);"></div>
<div style="position:absolute;left:204.70px;top:124.80px;line-height:20px;font-size:9.40px;font-weight:bold;color:#444;white-space:nowrap;">Planned Predecessors for Order 1001-000010-0001</div>
<svg style="position:absolute;left:720px;top:130px" width="9" height="9"><path d="M1.4 1.3 L7.5 7.4 M7.5 1.3 L1.4 7.4" stroke="#444" stroke-width="0.8"/></svg>
<div style="position:absolute;left:203.80px;top:153.40px;width:527.00px;height:209.80px;background:#fff;border-radius:2px;box-shadow:0 0 2px rgba(0,0,0,0.12);"></div>
<svg style="position:absolute;left:0;top:0" width="1042" height="457">
<g fill="none" stroke="#5A5A5A" stroke-width="0.8" stroke-linecap="round">
<circle cx="659.8" cy="169.5" r="4.3"/><path d="M663 172.8 L666 175.6"/>
<path d="M674.6 166.2 H685 M676.2 170.2 H683.4 M678.6 174.2 H681"/>

</g>
<path d="M696.6 164 V175.6" stroke="#E0E0E0" stroke-width="0.8"/>
</svg>
<div style="position:absolute;left:203.80px;top:209.30px;width:518.20px;height:29.45px;background:#FFFFFF;"></div>
<div style="position:absolute;left:211.80px;top:220.72px;width:6.80px;height:6.80px;border:1px solid #777;border-radius:1px;box-sizing:border-box;"></div>
<div style="position:absolute;left:230.70px;top:214.43px;line-height:20px;font-size:6.73px;font-weight:normal;color:#555;white-space:nowrap;">DIPPT50 - Diisopropa... (C-1030, CIBA)</div>
<div style="position:absolute;left:420.80px;top:214.43px;line-height:20px;font-size:6.96px;font-weight:normal;color:#555;white-space:nowrap;">Purchase Requisition Item</div>
<div style="position:absolute;left:555.00px;top:214.43px;line-height:20px;font-size:6.80px;font-weight:normal;color:#555;white-space:nowrap;letter-spacing:0.28px;">400 L</div>
<div style="position:absolute;left:633.80px;top:214.43px;line-height:20px;font-size:6.80px;font-weight:normal;color:#555;white-space:nowrap;letter-spacing:0.34px;">04/19/2023 00:00</div>
<div style="position:absolute;left:203.80px;top:238.75px;width:518.20px;height:29.45px;background:#F2F2F2;"></div>
<div style="position:absolute;left:203.80px;top:238.25px;width:518.20px;height:1.00px;background:#E6E6E6;"></div>
<div style="position:absolute;left:211.80px;top:250.17px;width:6.80px;height:6.80px;border:1px solid #777;border-radius:1px;box-sizing:border-box;"></div>
<div style="position:absolute;left:230.70px;top:243.88px;line-height:20px;font-size:6.63px;font-weight:normal;color:#555;white-space:nowrap;">FP RKM 704 (Finalpro... (C-1027, CIBA)</div>
<div style="position:absolute;left:420.80px;top:243.88px;line-height:20px;font-size:6.87px;font-weight:normal;color:#555;white-space:nowrap;">Scheduled Planned Order</div>
<div style="position:absolute;left:555.00px;top:243.88px;line-height:20px;font-size:6.80px;font-weight:normal;color:#555;white-space:nowrap;letter-spacing:0.28px;">2.000 L</div>
<div style="position:absolute;left:633.80px;top:243.88px;line-height:20px;font-size:6.80px;font-weight:normal;color:#555;white-space:nowrap;letter-spacing:0.34px;">04/20/2023 07:00</div>
<div style="position:absolute;left:203.80px;top:268.20px;width:518.20px;height:29.45px;background:#FFFFFF;"></div>
<div style="position:absolute;left:203.80px;top:267.70px;width:518.20px;height:1.00px;background:#E6E6E6;"></div>
<div style="position:absolute;left:211.80px;top:279.62px;width:6.80px;height:6.80px;border:1px solid #777;border-radius:1px;box-sizing:border-box;"></div>
<div style="position:absolute;left:230.70px;top:273.32px;line-height:20px;font-size:6.70px;font-weight:normal;color:#555;white-space:nowrap;">Isopropanol (C-1033, CIBA)</div>
<div style="position:absolute;left:420.80px;top:273.32px;line-height:20px;font-size:6.96px;font-weight:normal;color:#555;white-space:nowrap;">Purchase Requisition Item</div>
<div style="position:absolute;left:555.00px;top:273.32px;line-height:20px;font-size:6.80px;font-weight:normal;color:#555;white-space:nowrap;letter-spacing:0.28px;">600 L</div>
<div style="position:absolute;left:633.80px;top:273.32px;line-height:20px;font-size:6.80px;font-weight:normal;color:#555;white-space:nowrap;letter-spacing:0.34px;">04/19/2023 00:00</div>
<div style="position:absolute;left:203.80px;top:297.65px;width:518.20px;height:29.45px;background:#F2F2F2;"></div>
<div style="position:absolute;left:203.80px;top:297.15px;width:518.20px;height:1.00px;background:#E6E6E6;"></div>
<div style="position:absolute;left:211.80px;top:309.07px;width:6.80px;height:6.80px;border:1px solid #777;border-radius:1px;box-sizing:border-box;"></div>
<div style="position:absolute;left:230.70px;top:302.77px;line-height:20px;font-size:6.70px;font-weight:normal;color:#555;white-space:nowrap;">L&ouml;sungsmittel Typ 18 (C-1032, CIBA)</div>
<div style="position:absolute;left:420.80px;top:302.77px;line-height:20px;font-size:6.96px;font-weight:normal;color:#555;white-space:nowrap;">Purchase Requisition Item</div>
<div style="position:absolute;left:555.00px;top:302.77px;line-height:20px;font-size:6.80px;font-weight:normal;color:#555;white-space:nowrap;letter-spacing:0.28px;">200 L</div>
<div style="position:absolute;left:633.80px;top:302.77px;line-height:20px;font-size:6.80px;font-weight:normal;color:#555;white-space:nowrap;letter-spacing:0.34px;">04/19/2023 00:00</div>
<div style="position:absolute;left:203.80px;top:327.10px;width:518.20px;height:29.45px;background:#FFFFFF;"></div>
<div style="position:absolute;left:203.80px;top:326.60px;width:518.20px;height:1.00px;background:#E6E6E6;"></div>
<div style="position:absolute;left:211.80px;top:338.53px;width:6.80px;height:6.80px;border:1px solid #777;border-radius:1px;box-sizing:border-box;"></div>
<div style="position:absolute;left:230.70px;top:332.23px;line-height:20px;font-size:6.70px;font-weight:normal;color:#555;white-space:nowrap;">Mutterlauge (C-1029, CIBA)</div>
<div style="position:absolute;left:420.80px;top:332.23px;line-height:20px;font-size:6.96px;font-weight:normal;color:#555;white-space:nowrap;">Purchase Requisition Item</div>
<div style="position:absolute;left:555.00px;top:332.23px;line-height:20px;font-size:6.80px;font-weight:normal;color:#555;white-space:nowrap;letter-spacing:0.28px;">400 L</div>
<div style="position:absolute;left:633.80px;top:332.23px;line-height:20px;font-size:6.80px;font-weight:normal;color:#555;white-space:nowrap;letter-spacing:0.34px;">04/19/2023 00:00</div>
<div style="position:absolute;left:203.80px;top:356.55px;width:518.20px;height:6.65px;background:#F2F2F2;"></div>
<div style="position:absolute;left:203.80px;top:356.05px;width:518.20px;height:1.00px;background:#E6E6E6;"></div>
<div style="position:absolute;left:226.00px;top:209.30px;width:1.00px;height:153.90px;background:#E3E3E3;"></div>
<div style="position:absolute;left:415.90px;top:209.30px;width:1.00px;height:153.90px;background:#E3E3E3;"></div>
<div style="position:absolute;left:550.00px;top:209.30px;width:1.00px;height:153.90px;background:#E3E3E3;"></div>
<div style="position:absolute;left:628.00px;top:209.30px;width:1.00px;height:153.90px;background:#E3E3E3;"></div>
<div style="position:absolute;left:203.80px;top:208.80px;width:527.00px;height:1.00px;background:#E2E2E2;"></div>
<div style="position:absolute;left:203.80px;top:209.80px;width:518.20px;height:3.00px;background:linear-gradient(rgba(0,0,0,0.05),rgba(0,0,0,0));"></div>
<div style="position:absolute;left:211.80px;top:195.20px;width:6.80px;height:6.80px;border:1px solid #777;border-radius:1px;box-sizing:border-box;"></div>
<div style="position:absolute;left:230.30px;top:187.60px;line-height:20px;font-size:6.05px;font-weight:normal;color:#767676;white-space:nowrap;">Material</div>
<div style="position:absolute;left:420.80px;top:187.60px;line-height:20px;font-size:5.63px;font-weight:normal;color:#767676;white-space:nowrap;">Type</div>
<div style="position:absolute;left:555.00px;top:187.60px;line-height:20px;font-size:6.12px;font-weight:normal;color:#767676;white-space:nowrap;">Quantity</div>
<div style="position:absolute;left:633.80px;top:187.60px;line-height:20px;font-size:5.44px;font-weight:normal;color:#767676;white-space:nowrap;">Date</div>
<div style="position:absolute;left:722.00px;top:209.30px;width:8.80px;height:153.90px;background:#fff;"></div>
<div style="position:absolute;left:724.60px;top:210.50px;width:3.30px;height:86.00px;background:#A8A8A8;border-radius:2px;"></div>
<svg style="position:absolute;left:706px;top:166px" width="16" height="9"><g fill="none" stroke="#555" stroke-width="0.95"><circle cx="4.4" cy="4.5" r="1.35"/><circle cx="7.9" cy="4.5" r="1.35"/><circle cx="11.5" cy="4.5" r="1.35"/></g></svg>
<div style="position:absolute;left:191.50px;top:376.50px;width:551.70px;height:21.00px;background:#F9DD62;"></div>
<div style="position:absolute;left:367.40px;width:200px;text-align:center;top:377.40px;line-height:20px;font-size:6.50px;font-weight:normal;color:#6B6030;white-space:nowrap;">Ok</div>
<svg style="position:absolute;left:0;top:0" width="1042" height="457">
<defs><filter id="sh" x="-20%" y="-20%" width="140%" height="140%"><feGaussianBlur in="SourceAlpha" stdDeviation="0.8"/><feOffset dx="-0.8" dy="0.9" result="b"/><feComponentTransfer><feFuncA type="linear" slope="0.38"/></feComponentTransfer><feMerge><feMergeNode/><feMergeNode in="SourceGraphic"/></feMerge></filter></defs>
<g filter="url(#sh)">
<path d="M890.6 391.5 C893.0 345.5, 891.4 305.8, 887.0 297.8 C881.6 288.1, 858.9 215.2, 769 215.4" fill="none" stroke="#FADE5E" stroke-width="5.3" stroke-linecap="round"/>
<path d="M755.3 214.3 L770.9 207.1 L770.9 223 Z" fill="#FADE5E"/>
</g>
</svg>
</body></html>
